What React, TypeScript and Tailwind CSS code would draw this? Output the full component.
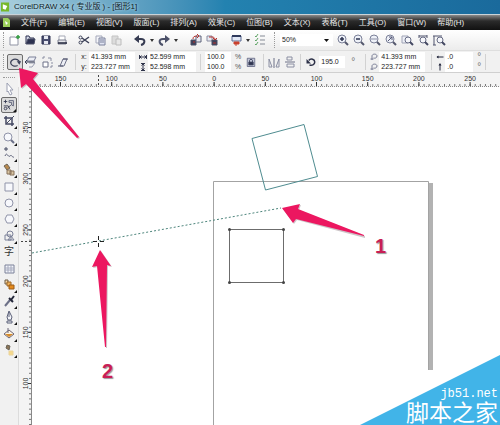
import React, { useState } from "react";

interface IIconProps {
  children: React.ReactNode;
  className?: string;
}

interface IToolButtonProps {
  label: string;
  icon: React.ReactNode;
  active?: boolean;
  flyout?: boolean;
}

interface IFieldProps {
  id: string;
  label: React.ReactNode;
  name: string;
  value: string;
  width: string;
}

const MENUS = [
  "文件(F)",
  "编辑(E)",
  "视图(V)",
  "版面(L)",
  "排列(A)",
  "效果(C)",
  "位图(B)",
  "文本(X)",
  "表格(T)",
  "工具(O)",
  "窗口(W)",
  "帮助(H)",
];

const Icon: React.FC<IIconProps> = ({ children, className = "h-4 w-4" }) => (
  <svg
    viewBox="0 0 16 16"
    className={className}
    fill="none"
    stroke="#4a4f66"
    strokeWidth="1"
    aria-hidden="true">
    {children}
  </svg>
);

const Lens: React.FC<{ children?: React.ReactNode }> = ({ children }) => (
  <Icon>
    <circle cx="7" cy="7" r="4" fill="#eef1f8" stroke="#7b8098" />
    <path d="M10 10l3 3" stroke="#55596e" strokeWidth="2" />
    {children}
  </Icon>
);

const icons = {
  newDoc: (
    <Icon>
      <path d="M4 5h5l3 2v6H4z" fill="#fff" stroke="#8f93a3" />
      <path d="M12 3v4M10 5h4" stroke="#2f9a3d" strokeWidth="1.5" />
    </Icon>
  ),
  open: (
    <Icon>
      <path d="M4 12V4h3l1 2h4v2" stroke="#2c3150" fill="#d5d9e8" />
      <path d="M4 12l2-5h7l-1 5z" fill="#2c3150" />
    </Icon>
  ),
  save: (
    <Icon>
      <path d="M4 4h8v8H4z" fill="#4a4f70" stroke="#2c3150" />
      <path d="M6 4h4v3H6zM6 9h4v3H6z" fill="#e7e9f2" stroke="none" />
    </Icon>
  ),
  print: (
    <Icon>
      <path d="M5 8V4h6v4" fill="#fff" stroke="#a5a8b5" />
      <path d="M4 8h8v4H4z" fill="#e4e5ea" stroke="#7d8090" />
      <path d="M4 11h9" stroke="#22263c" strokeWidth="1.5" />
    </Icon>
  ),
  cut: (
    <Icon>
      <path d="M6 6l7 5M6 10l7-5" stroke="#3c4158" strokeWidth="1.5" />
      <circle cx="4.5" cy="5.5" r="1.5" stroke="#3c4158" />
      <circle cx="4.5" cy="10.5" r="1.5" stroke="#3c4158" />
    </Icon>
  ),
  copy: (
    <Icon>
      <path d="M4 4h6v7H4z" fill="#f4f5fa" stroke="#a5a9ba" />
      <path d="M7 6h6v7H7z" fill="#e1e5f3" stroke="#7b809a" />
      <path d="M8 8h4M8 10h4" stroke="#7b809a" />
    </Icon>
  ),
  paste: (
    <Icon>
      <path d="M4 4h6v8H4z" fill="#dcdcdc" stroke="#c4c4c4" />
      <path d="M8 7h5v6H8z" fill="#e8e8e8" stroke="#bcbcbc" />
    </Icon>
  ),
  undo: (
    <Icon>
      <path d="M6 7h3c5 0 4 5 0 6" stroke="#363b52" strokeWidth="2" />
      <path d="M2 7l5-4v8z" fill="#363b52" stroke="none" />
    </Icon>
  ),
  redo: (
    <Icon>
      <path d="M10 7H7c-5 0-4 5 0 6" stroke="#4b5068" strokeWidth="2" />
      <path d="M14 7L9 3v8z" fill="#4b5068" stroke="none" />
    </Icon>
  ),
  importFile: (
    <Icon>
      <path d="M3 8h5v5H3z" fill="#3d4159" />
      <path d="M8 4h5v6H8z" fill="#e9ebf3" stroke="#5b6078" />
      <path d="M5 7c0-2 1-3 4-3M9 2l2 2-2 2M5 10h2" stroke="#b8332f" />
    </Icon>
  ),
  exportFile: (
    <Icon>
      <path d="M3 4h5v5H3z" fill="#e9ebf3" stroke="#8a8ea2" />
      <path d="M8 8h5v5H8z" fill="#3d4159" />
      <path d="M5 5h3c2 0 3 1 3 3M9 6l2 2 2-2M9 11h3" stroke="#b8332f" />
    </Icon>
  ),
  launcher: (
    <Icon>
      <path d="M4 4h9v5H4z" fill="#e3e9f6" stroke="#5b6b92" />
      <path d="M4 4h9" stroke="#2f3a5c" strokeWidth="2" />
      <path d="M6 10h5v2H6z" fill="#c9402f" stroke="#c9402f" />
      <path d="M8 12v2" stroke="#c9402f" />
    </Icon>
  ),
  options: (
    <Icon>
      <path d="M8 4h5M8 8h5M8 12h5" stroke="#858b96" />
      <path d="M3 4l1 1 2-3M3 8l1 1 2-3M3 12l1 1 2-3" stroke="#5fa566" />
    </Icon>
  ),
  zoomIn: (
    <Lens>
      <path d="M5 7h4M7 5v4" stroke="#2d3350" strokeWidth="1.5" />
    </Lens>
  ),
  zoomOut: (
    <Lens>
      <path d="M5 7h4" stroke="#2d3350" strokeWidth="1.5" />
    </Lens>
  ),
  zoomOne: (
    <Lens>
      <path d="M5 6v2M9 6v2M7 6v2" stroke="#8c90a6" />
    </Lens>
  ),
  zoomSelected: (
    <Lens>
      <path d="M5 9l4-4M6 5h3v3" stroke="#565b78" />
    </Lens>
  ),
  zoomAll: (
    <Icon>
      <path d="M3 4h6v7H3z" fill="#edeff6" stroke="#a0a4b6" />
      <circle cx="9" cy="8" r="3" stroke="#666b84" fill="#f6f7fb" />
      <path d="M11 10l3 3" stroke="#444962" strokeWidth="2" />
    </Icon>
  ),
  zoomPage: (
    <Icon>
      <path d="M4 4h8M4 3v3M12 3v3" stroke="#50556e" />
      <circle cx="8" cy="8" r="3" stroke="#666b84" fill="#f6f7fb" />
      <path d="M10 10l3 3" stroke="#444962" strokeWidth="2" />
    </Icon>
  ),
  zoomHeight: (
    <Icon>
      <path d="M3 4v9M2 4h3M2 13h3M5 4h6" stroke="#50556e" />
      <circle cx="9" cy="8" r="3" stroke="#666b84" fill="#f6f7fb" />
      <path d="M11 10l3 3" stroke="#444962" strokeWidth="2" />
    </Icon>
  ),
  rotate: (
    <Icon>
      <path d="M11 12a5 4 0 1 1 2-4" stroke="#3d4258" strokeWidth="1.5" />
      <path d="M10 7h5l-2 4z" fill="#3d4258" stroke="none" />
    </Icon>
  ),
  reflect: (
    <Icon>
      <path d="M4 7l2-4h7l-2 4z" stroke="#7b8098" fill="#eceef5" />
      <path d="M6 9h6l-3 4H6" stroke="#9b9fb2" />
      <path d="M2 8h10M4 6L2 8l2 2" stroke="#3d4258" />
    </Icon>
  ),
  scale: (
    <Icon>
      <path d="M4 8h5v5H4z" stroke="#6c7087" fill="#fff" />
      <path d="M4 3v2M4 3h2M13 8v2M11 13h2v-2" stroke="#8a8ea2" />
      <path d="M9 4h3M12 4v3" stroke="#8a8ea2" />
    </Icon>
  ),
  skew: (
    <Icon>
      <path d="M5 12l3-7h4l-3 7z" stroke="#6c7087" fill="#eceef5" />
      <path d="M3 12h5M8 5h5" stroke="#50556e" />
    </Icon>
  ),
  lock: (
    <Icon className="h-3 w-3">
      <path d="M3 3h10v11H3z" fill="#c3c7d8" stroke="#565b78" />
      <path d="M6 8V6c0-2 4-2 4 0v2" stroke="#2f3450" />
      <path d="M5 8h6v4H5z" fill="#2f3450" />
    </Icon>
  ),
  mirrorH: (
    <Icon>
      <path d="M3 13V5l3 8zM13 13V5l-3 8z" stroke="#8a8ea2" />
      <path d="M8 4v10" stroke="#6c7087" />
    </Icon>
  ),
  mirrorV: (
    <Icon>
      <path d="M5 3h5v3H5zM5 10h7v3H5z" stroke="#8a8ea2" />
      <path d="M3 8h10" stroke="#6c7087" />
    </Icon>
  ),
  angle: (
    <Icon className="h-3 w-3">
      <path d="M5 6c3-4 8-1 8 2 0 4-4 5-7 4" stroke="#2d3148" strokeWidth="2" />
      <path d="M2 4v6h6z" fill="#2d3148" stroke="none" />
    </Icon>
  ),
  pivot: (
    <Icon className="h-2 w-2">
      <path d="M4 14V6c0-5 10-5 10 0 0 4-4 5-7 4" stroke="#7a7f96" strokeWidth="2" />
      <path d="M1 12h6" stroke="#7a7f96" strokeWidth="2" />
    </Icon>
  ),
  width: (
    <Icon className="h-2 w-2">
      <path d="M1 4v8M15 4v8M2 8h12M5 5L2 8l3 3M11 5l3 3-3 3" stroke="#30354c" strokeWidth="2" />
    </Icon>
  ),
  height: (
    <Icon className="h-2 w-2">
      <path d="M4 1h8M4 15h8M8 2v12M5 5l3-3 3 3M5 11l3 3 3-3" stroke="#30354c" strokeWidth="2" />
    </Icon>
  ),
  skewH: (
    <Icon className="h-2 w-2">
      <path d="M2 8h13" stroke="#22263c" strokeWidth="2" />
      <path d="M1 8l4-3v6z" fill="#22263c" stroke="none" />
    </Icon>
  ),
  skewV: (
    <Icon className="h-2 w-2">
      <path d="M8 2v13" stroke="#22263c" strokeWidth="2" />
      <path d="M8 0l3 5H5z" fill="#22263c" stroke="none" />
    </Icon>
  ),
};

const tools: IToolButtonProps[][] = [
  [
    {
      label: "Pick",
      icon: (
        <Icon>
          <path d="M6 2l6 7H9l2 4-2 1-2-4-1 1z" fill="#fff" stroke="#9b9fb2" />
        </Icon>
      ),
    },
    {
      label: "Free transform",
      active: true,
      flyout: true,
      icon: (
        <Icon>
          <path d="M2 4h4M4 2v4M2 9h5l2 4M6 12l4-4" stroke="#333850" />
          <circle cx="4" cy="12" r="1.5" stroke="#333850" />
          <path d="M8 3h5v6l-2-1V5H8z" stroke="#555a74" />
        </Icon>
      ),
    },
    {
      label: "Crop",
      flyout: true,
      icon: (
        <Icon>
          <path d="M5 3v8h8M3 5h8v8" stroke="#454a63" strokeWidth="1.5" />
          <path d="M5 11l8-8" stroke="#454a63" />
        </Icon>
      ),
    },
  ],
  [
    {
      label: "Zoom",
      flyout: true,
      icon: (
        <Icon>
          <circle cx="7" cy="7" r="4" stroke="#8f93a8" fill="#f7f8fc" />
          <path d="M10 10l3 3" stroke="#6b7088" strokeWidth="2" />
        </Icon>
      ),
    },
    {
      label: "Freehand",
      flyout: true,
      icon: (
        <Icon>
          <path d="M5 1v4M3 3h4" stroke="#454a63" />
          <path d="M4 10c2-5 3 2 5 0s2 2 4 1" stroke="#5b6078" />
        </Icon>
      ),
    },
    {
      label: "Smart fill",
      flyout: true,
      icon: (
        <Icon>
          <path d="M3 4l3-2 3 4-3 2z" fill="#b98a4e" stroke="#6c6457" />
          <path d="M6 8h4v4H6zM9 9h4v4H9z" fill="#d8c3a1" stroke="#85705a" />
        </Icon>
      ),
    },
  ],
  [
    {
      label: "Rectangle",
      flyout: true,
      icon: (
        <Icon>
          <path d="M4 4h8v8H4z" stroke="#8f93a8" fill="#f7f8fc" />
        </Icon>
      ),
    },
    {
      label: "Ellipse",
      flyout: true,
      icon: (
        <Icon>
          <circle cx="8" cy="8" r="4" stroke="#8f93a8" fill="#f7f8fc" />
        </Icon>
      ),
    },
    {
      label: "Polygon",
      flyout: true,
      icon: (
        <Icon>
          <path d="M6 4h5l2 4-2 4H6L4 8z" stroke="#8f93a8" fill="#f7f8fc" />
        </Icon>
      ),
    },
  ],
  [
    {
      label: "Basic shapes",
      flyout: true,
      icon: (
        <Icon>
          <circle cx="9" cy="6" r="3" stroke="#7b8098" />
          <path d="M4 7h6v5H4zM10 8l3 4H7z" stroke="#7b8098" />
        </Icon>
      ),
    },
    {
      label: "Text",
      icon: <span className="text-[10px] leading-4 text-[#333]">字</span>,
    },
    {
      label: "Table",
      icon: (
        <Icon>
          <path d="M4 5h9v8H4z" fill="#f3f5fb" stroke="#7b8098" />
          <path d="M4 8h9M4 10h9M7 5v8M10 5v8" stroke="#a6aabd" />
        </Icon>
      ),
    },
  ],
  [
    {
      label: "Blend",
      flyout: true,
      icon: (
        <Icon>
          <path d="M4 3h3v4H4z" fill="#f8d9a8" stroke="#6b5a44" />
          <path d="M6 5h4v4H6z" fill="#eeb25c" stroke="#9a6526" />
          <path d="M8 8h5v4H8z" fill="#e58a1c" stroke="#9a5a16" />
        </Icon>
      ),
    },
    {
      label: "Eyedropper",
      flyout: true,
      icon: (
        <Icon>
          <path d="M4 13l5-6" stroke="#6c7087" strokeWidth="2" />
          <path d="M8 5l4 4M10 7l3-4" stroke="#222639" strokeWidth="2" />
        </Icon>
      ),
    },
    {
      label: "Outline",
      flyout: true,
      icon: (
        <Icon>
          <path d="M8 2l3 6-1 3H7L6 8zM8 3v5M6 12h5v2H6z" stroke="#5b6078" fill="#f2f3f8" />
        </Icon>
      ),
    },
  ],
  [
    {
      label: "Fill",
      flyout: true,
      icon: (
        <Icon>
          <path d="M3 8l5-4 5 4-5 4z" fill="#fdf3df" stroke="#6b6578" />
          <path d="M4 8h8l-4 3z" fill="#d58a2a" stroke="none" />
          <path d="M7 2v5" stroke="#6b6578" />
        </Icon>
      ),
    },
    {
      label: "Interactive fill",
      flyout: true,
      icon: (
        <Icon>
          <path d="M6 3l3 1-1 4-3-2z" fill="#8d7658" stroke="#6b6457" />
          <path d="M8 9h4v4H8z" fill="#f6d98b" stroke="#ead39a" />
        </Icon>
      ),
    },
  ],
];

const ToolButton: React.FC<IToolButtonProps> = ({ label, icon, active, flyout }) => (
  <button
    aria-label={label}
    className={
      active
        ? "relative flex h-4 w-4 items-center justify-center rounded-xs border border-[#6d6d6d] bg-[#dcdcdc]"
        : "relative flex h-4 w-4 items-center justify-center"
    }>
    {icon}
    {flyout && (
      <svg viewBox="0 0 3 3" className="absolute right-0 bottom-0 h-[3px] w-[3px]" aria-hidden="true">
        <path d="M3 0v3H0z" fill="#111" />
      </svg>
    )}
  </button>
);

const Caret: React.FC = () => (
  <svg viewBox="0 0 8 16" className="h-4 w-2 shrink-0" aria-hidden="true">
    <path d="M2 7h4L4 10z" fill="#333" />
  </svg>
);

const Grip: React.FC = () => (
  <span className="h-4 w-0.5 shrink-0 border-l border-dotted border-[#9a9a9a]" />
);

const Separator: React.FC = () => <span className="h-4 w-px shrink-0 bg-[#d2d2d2]" />;

const Field: React.FC<IFieldProps> = ({ id, label, name, value, width }) => {
  const [text, setText] = useState(value);
  return (
    <div className="flex items-center gap-px">
      <label htmlFor={id} title={name} className="flex w-2 justify-center leading-[10px]">
        {label}
      </label>
      <input
        id={id}
        type="text"
        aria-label={name}
        value={text}
        onChange={(e) => setText(e.target.value)}
        className={`h-2.5 bg-white pl-0.5 leading-[10px] ${width}`}
      />
    </div>
  );
};

const MainToolbar: React.FC = () => {
  const [zoom, setZoom] = useState("50%");
  return (
    <div className="flex h-[21px] items-center border-b border-[#dedede] bg-linear-to-b from-white to-[#ececec] pl-[3px]">
      <Grip />
      <div className="ml-px flex">
        <ToolButton label="New" icon={icons.newDoc} />
        <ToolButton label="Open" icon={icons.open} />
        <ToolButton label="Save" icon={icons.save} />
        <ToolButton label="Print" icon={icons.print} />
      </div>
      <div className="ml-1.5 flex">
        <ToolButton label="Cut" icon={icons.cut} />
        <ToolButton label="Copy" icon={icons.copy} />
        <ToolButton label="Paste" icon={icons.paste} />
      </div>
      <div className="ml-2 flex">
        <ToolButton label="Undo" icon={icons.undo} />
        <Caret />
        <ToolButton label="Redo" icon={icons.redo} />
        <Caret />
      </div>
      <div className="ml-2 flex">
        <ToolButton label="Import" icon={icons.importFile} />
        <ToolButton label="Export" icon={icons.exportFile} />
      </div>
      <div className="ml-2 flex">
        <ToolButton label="Application launcher" icon={icons.launcher} />
        <Caret />
        <ToolButton label="Options" icon={icons.options} />
      </div>
      <div className="ml-1.5 flex">
        <Grip />
      </div>
      <div className="relative ml-1 flex items-center">
        <select
          aria-label="Zoom level"
          value={zoom}
          onChange={(e) => setZoom(e.target.value)}
          className="h-3 w-[53px] appearance-none bg-white pl-0.5 text-[7px] leading-3 text-[#222]">
          <option>50%</option>
          <option>100%</option>
        </select>
        <svg viewBox="0 0 5 3" className="pointer-events-none absolute right-1 h-[3px] w-[5px]">
          <path d="M0 0h5L2.5 3z" fill="#111" />
        </svg>
      </div>
      <div className="ml-0.5 flex">
        <ToolButton label="Zoom in" icon={icons.zoomIn} />
        <ToolButton label="Zoom out" icon={icons.zoomOut} />
        <ToolButton label="Zoom one shot" icon={icons.zoomOne} />
        <ToolButton label="Zoom to selected" icon={icons.zoomSelected} />
        <ToolButton label="Zoom to all" icon={icons.zoomAll} />
        <ToolButton label="Zoom to page" icon={icons.zoomPage} />
        <ToolButton label="Zoom to height" icon={icons.zoomHeight} />
      </div>
    </div>
  );
};

const PropertyBar: React.FC = () => (
  <div className="flex h-[22px] items-center border-b border-[#d0d0d0] bg-[#f1f1f1] pl-[3px] text-[7px] leading-[10px] text-[#222]">
    <Grip />
    <div className="ml-0.5 flex">
      <ToolButton label="Free rotation" icon={icons.rotate} active />
      <ToolButton label="Free reflection" icon={icons.reflect} />
      <ToolButton label="Free scale" icon={icons.scale} />
      <ToolButton label="Free skew" icon={icons.skew} />
    </div>
    <div className="ml-1 flex items-center gap-1">
      <Separator />
      <div className="flex flex-col">
        <Field id="pos-x" label="x:" name="position x" value="41.393 mm" width="w-[46px]" />
        <Field id="pos-y" label="y:" name="position y" value="223.727 mm" width="w-[46px]" />
      </div>
      <div className="flex flex-col">
        <Field id="size-w" label={icons.width} name="width" value="52.599 mm" width="w-12" />
        <Field id="size-h" label={icons.height} name="height" value="52.598 mm" width="w-12" />
      </div>
      <Separator />
      <div className="flex flex-col">
        <input
          aria-label="Horizontal scale"
          defaultValue="100.0"
          className="h-2.5 w-[26px] bg-white pl-0.5 leading-[10px]"
        />
        <input
          aria-label="Vertical scale"
          defaultValue="100.0"
          className="h-2.5 w-[26px] bg-white pl-0.5 leading-[10px]"
        />
      </div>
      <div className="flex flex-col text-[#555]">
        <span>%</span>
        <span>%</span>
      </div>
      <button aria-label="Lock ratio">{icons.lock}</button>
    </div>
    <div className="ml-1.5 flex items-center gap-0.5">
      <Separator />
      <div className="flex">
        <ToolButton label="Mirror horizontally" icon={icons.mirrorH} />
        <ToolButton label="Mirror vertically" icon={icons.mirrorV} />
      </div>
      <Separator />
    </div>
    <div className="ml-1 flex items-center gap-0.5">
      <label htmlFor="rotation" title="rotation">
        {icons.angle}
      </label>
      <input
        id="rotation"
        aria-label="rotation"
        defaultValue="195.0"
        className="h-3 w-[26px] bg-white pl-0.5 leading-3"
      />
      <span className="ml-1 text-[10px] text-[#777]">°</span>
    </div>
    <div className="ml-2.5 flex items-center gap-1">
      <Separator />
      <div className="flex flex-col">
        <Field id="pivot-x" label={icons.pivot} name="pivot x" value="41.393 mm" width="w-[46px]" />
        <Field id="pivot-y" label={icons.pivot} name="pivot y" value="223.727 mm" width="w-[46px]" />
      </div>
    </div>
    <div className="ml-1.5 flex items-center gap-1">
      <Separator />
      <div className="flex flex-col">
        <Field id="skew-x" label={icons.skewH} name="skew x" value=".0" width="w-7" />
        <Field id="skew-y" label={icons.skewV} name="skew y" value=".0" width="w-7" />
      </div>
      <div className="flex flex-col text-[10px] text-[#777]">
        <span>°</span>
        <span>°</span>
      </div>
      <Separator />
    </div>
  </div>
);

const H_LABELS = [150, 100, 50, 0, 50, 100, 150, 200, 250, 300, 350, 400];
const V_LABELS = [350, 300, 250, 200, 150, 100, 50, 0];
const RULER_STEP = 51.2;

const HorizontalRuler: React.FC = () => (
  <svg className="block h-[14px] w-full bg-[#f4f4f4]" aria-hidden="true">
    {Array.from({ length: 130 }, (_, i) => {
      const x = 16.9 + i * (RULER_STEP / 10);
      return <path key={i} d={`M${x} 11v2`} stroke="#777" strokeWidth="1" />;
    })}
    {H_LABELS.map((value, i) => {
      const x = 42.5 + i * RULER_STEP;
      return (
        <g key={i}>
          <path d={`M${x} 9v4`} stroke="#333" />
          <text x={x} y="8" textAnchor="middle" fontSize="7" fill="#333">
            {value}
          </text>
        </g>
      );
    })}
    <path d="M80.5 2v11" stroke="#444" strokeDasharray="2 2" />
    <path d="M14 13.5h2000" stroke="#888" strokeDasharray="1 1" />
  </svg>
);

const VerticalRuler: React.FC = () => (
  <svg className="block h-full w-[14px] shrink-0 border-l border-[#dcdcdc] bg-[#f4f4f4]" aria-hidden="true">
    {Array.from({ length: 90 }, (_, i) => {
      const y = 4.7 + i * (RULER_STEP / 10);
      return <path key={i} d={`M10 ${y}h2`} stroke="#777" strokeWidth="1" />;
    })}
    {V_LABELS.map((value, i) => {
      const y = 40.5 + i * RULER_STEP;
      return (
        <g key={i}>
          <path d={`M9 ${y}h3`} stroke="#333" />
          <text transform={`translate(9 ${y}) rotate(-90)`} textAnchor="middle" fontSize="7" fill="#333">
            {value}
          </text>
        </g>
      );
    })}
    <path d="M2 154.5h10" stroke="#444" strokeDasharray="2 2" />
    <path d="M12.5 0v2000" stroke="#888" />
  </svg>
);

const Drawing: React.FC = () => (
  <svg className="absolute inset-0 h-full w-full" aria-label="drawing">
    <g transform="translate(-32 -87)" fill="none">
      <path d="M431 183v187" stroke="#b2b2b2" strokeWidth="4" />
      <path d="M213.5 600V181.5h215V370" stroke="#a3a3a3" />
      <path d="M252 138.500L304 124.500L317.500 176.500L265.500 190Z" stroke="#4f8c90" />
      <path d="M32 253L281 208" stroke="#4d857c" strokeDasharray="2 2" />
      <path d="M229.5 229.5h54v53h-54z" stroke="#6c6c6c" />
      {[
        [229.5, 229.5],
        [283.5, 229.5],
        [229.5, 282.5],
        [283.5, 282.5],
      ].map(([x, y]) => (
        <circle key={`${x}-${y}`} cx={x} cy={y} r="1.5" fill="#444" />
      ))}
      <path d="M93 241.5h4M100 241.5h4M98.5 236v4M98.5 243v4" stroke="#222" />
    </g>
  </svg>
);

const Arrows: React.FC = () => (
  <svg className="pointer-events-none absolute inset-0 h-full w-full" aria-hidden="true">
    <g fill="#9d8f94" opacity="0.5" transform="translate(1 1)">
      <path d="M19 68l19 5-5 6 46 58-2 1-51-54-5 4z" />
      <path d="M100 250l11 16-4-1-1 82h-1l-8-81-5 1z" />
      <path d="M282 208l18-4-2 5 66 26v2l-68-18-3 4z" />
    </g>
    <g fill="#ec1760">
      <path d="M19 68l19 5-5 6 46 58-2 1-51-54-5 4z" />
      <path d="M100 250l11 16-4-1-1 82h-1l-8-81-5 1z" />
      <path d="M282 208l18-4-2 5 66 26v1l-68-17-3 4z" />
    </g>
  </svg>
);

const Watermark: React.FC = () => (
  <div className="pointer-events-none absolute right-0 bottom-0 flex h-[70px] w-[140px] flex-col items-end justify-end pr-0.5 text-white">
    <svg className="absolute right-0 bottom-0 h-[70px] w-[140px]" viewBox="0 0 140 70" aria-hidden="true">
      <path d="M0 70L140 0v70z" fill="#41b4e8" />
    </svg>
    <span className="relative font-['Liberation_Mono','Noto_Sans_CJK_SC',monospace] text-[12px] leading-[14px]">
      jb51.net
    </span>
    <span className="relative text-[23px] leading-6 whitespace-nowrap">脚本之家</span>
  </div>
);

const App: React.FC = () => {
  return (
    <div className="relative flex min-h-screen flex-col overflow-hidden bg-white font-['Liberation_Sans','Noto_Sans_CJK_SC',sans-serif]">
      <header>
        <div className="flex h-[14px] items-center gap-1 bg-linear-to-r from-[#a9cfdc] via-[#2382b0] via-45% to-[#1a6a9c] pl-px text-[8px] leading-3 text-[#0d1b26]">
          <svg viewBox="0 0 10 12" className="h-3 w-[9px]" aria-hidden="true">
            <path d="M0 1h9v10H0z" fill="#76b82a" />
            <path d="M2 3l5 2-2 4-3-1z" fill="#fff" />
          </svg>
          <h1 className="text-shadow-[0_0_3px_#d8eef6]">CorelDRAW X4 ( 专业版 ) - [图形1]</h1>
        </div>
        <nav className="flex h-4 items-center gap-[11px] border-t border-[#c9d3d8] bg-linear-to-b from-[#8a8a8a] via-[#2b2b2b] via-40% to-[#111] pl-[3px] text-[8px] leading-3 text-[#e8e8e8]">
          <svg viewBox="0 0 7 9" className="h-[9px] w-[7px]" aria-hidden="true">
            <path d="M0 0h5l2 2v7H0z" fill="#9ccf5a" />
            <path d="M2 3l3 2-2 2z" fill="#fff" />
          </svg>
          {MENUS.map((menu) => (
            <button key={menu} className="whitespace-nowrap">
              {menu}
            </button>
          ))}
        </nav>
      </header>
      <MainToolbar />
      <PropertyBar />
      <main className="flex flex-1">
        <aside className="flex w-[18px] shrink-0 flex-col items-center gap-px bg-[#f1f1f1] pt-1">
          <span className="mb-0.5 h-px w-3 border-t border-dotted border-[#9a9a9a]" />
          {tools.map((group, i) => (
            <div key={i} className="flex flex-col">
              {group.map((tool) => (
                <ToolButton key={tool.label} {...tool} />
              ))}
            </div>
          ))}
        </aside>
        <div className="flex min-w-0 flex-1 flex-col">
          <HorizontalRuler />
          <div className="flex flex-1">
            <div className="relative w-[14px] shrink-0">
              <div className="absolute inset-0 overflow-hidden">
                <VerticalRuler />
              </div>
            </div>
            <div className="relative flex-1 overflow-hidden">
              <Drawing />
            </div>
          </div>
        </div>
      </main>
      <Arrows />
      <span className="absolute top-[234px] left-[375px] text-[20px] leading-6 font-bold text-[#c81e56] text-shadow-[1px_1px_1px_#999]">
        1
      </span>
      <span className="absolute top-[359px] left-[102px] text-[20px] leading-6 font-bold text-[#c81e56] text-shadow-[1px_1px_1px_#999]">
        2
      </span>
      <Watermark />
    </div>
  );
};

export default App;
